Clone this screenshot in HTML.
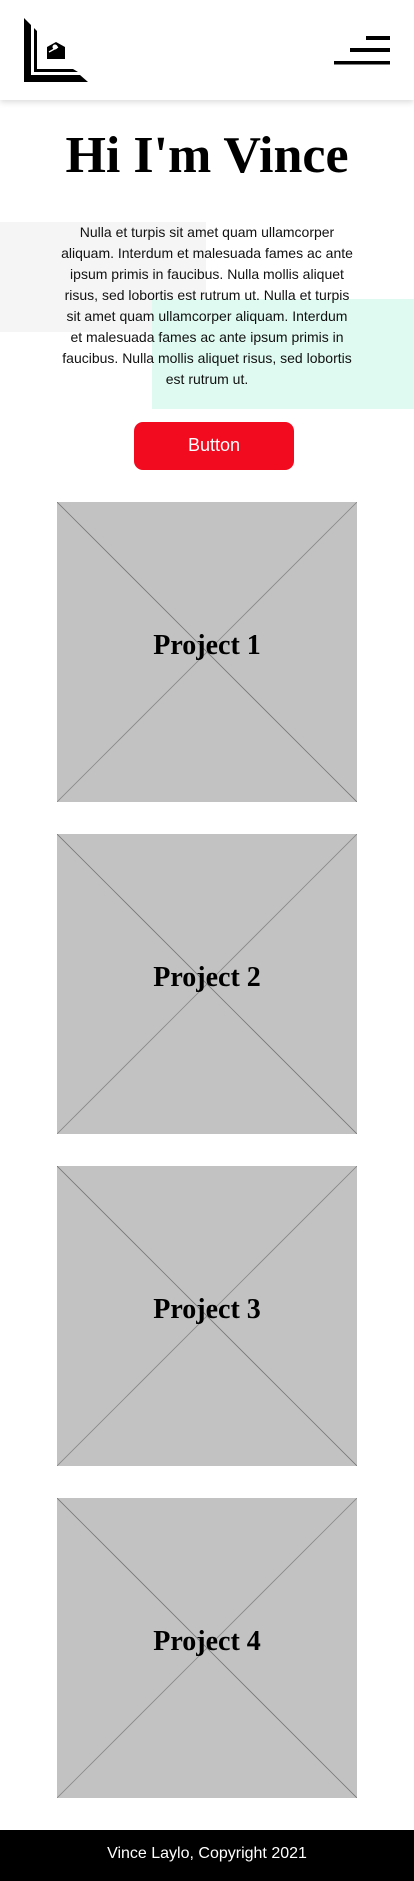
<!DOCTYPE html>
<html><head><meta charset="utf-8"><style>
*{margin:0;padding:0;box-sizing:border-box}
body{width:414px;height:1881px;background:#fff;position:relative;overflow:hidden;font-family:"Liberation Sans",sans-serif}
.hdr{position:absolute;left:0;top:0;width:414px;height:100px;background:#fff;box-shadow:0 2px 6px rgba(0,0,0,.15);z-index:3}
.abs{position:absolute}
h1{position:absolute;top:126px;left:0;width:414px;text-align:center;font-family:"Liberation Serif",serif;font-weight:bold;font-size:52px;letter-spacing:0;color:#000}
.p{position:absolute;left:60px;width:294px;top:222px;text-align:center;font-size:14px;line-height:21px;color:#111;z-index:2}
.btn{position:absolute;left:134px;top:422px;width:160px;height:48px;background:#f20a1e;border-radius:9px;color:#fff;font-size:18px;text-align:center;line-height:46px}
.box{position:absolute;left:57px;width:300px;height:300px;background:#c2c2c2}
.box svg{position:absolute;left:0;top:0}
.box span{position:absolute;left:0;width:300px;top:128px;text-align:center;font-family:"Liberation Serif",serif;font-weight:bold;font-size:28px;color:#000}
.ft{position:absolute;left:0;top:1830px;width:414px;height:51px;background:#000;color:#fff;font-size:16px;text-align:center;line-height:48px}
</style></head><body>
<div class="hdr">
<svg class="abs" style="left:0;top:0" width="414" height="100">
<polygon points="24,18 31,25 31,75 80,75 88,82 24,82" fill="#000"/>
<polygon points="34,28 37,31 37,69 73,69 78,72 34,72" fill="#000"/>
<polygon points="47,47 56,42 65,47 65,59 47,59" fill="#000"/>
<circle cx="55" cy="47" r="2.5" fill="#fff"/>
<line x1="49" y1="52" x2="58" y2="47" stroke="#fff" stroke-width="1.3"/>
<rect x="366" y="36" width="24" height="4" fill="#000"/>
<rect x="350" y="48" width="40" height="4" fill="#000"/>
<rect x="334" y="61" width="56" height="3.5" fill="#000"/>
</svg>
</div>
<h1>Hi I'm Vince</h1>
<div class="abs" style="left:0;top:222px;width:206px;height:110px;background:#f5f5f5"></div>
<div class="abs" style="left:152px;top:299px;width:262px;height:110px;background:#dffaf1"></div>
<div class="p">Nulla et turpis sit amet quam ullamcorper aliquam. Interdum et malesuada fames ac ante ipsum primis in faucibus. Nulla mollis aliquet risus, sed lobortis est rutrum ut. Nulla et turpis sit amet quam ullamcorper aliquam. Interdum et malesuada fames ac ante ipsum primis in faucibus. Nulla mollis aliquet risus, sed lobortis est rutrum ut.</div>
<div class="btn">Button</div>
<div class="box" style="top:502px"><svg width="300" height="300"><line x1="0" y1="0" x2="300" y2="300" stroke="#777" stroke-width=".8"/><line x1="300" y1="0" x2="0" y2="300" stroke="#888" stroke-width=".8"/></svg><span>Project 1</span></div>
<div class="box" style="top:834px"><svg width="300" height="300"><line x1="0" y1="0" x2="300" y2="300" stroke="#777" stroke-width=".8"/><line x1="300" y1="0" x2="0" y2="300" stroke="#888" stroke-width=".8"/></svg><span>Project 2</span></div>
<div class="box" style="top:1166px"><svg width="300" height="300"><line x1="0" y1="0" x2="300" y2="300" stroke="#777" stroke-width=".8"/><line x1="300" y1="0" x2="0" y2="300" stroke="#888" stroke-width=".8"/></svg><span>Project 3</span></div>
<div class="box" style="top:1498px"><svg width="300" height="300"><line x1="0" y1="0" x2="300" y2="300" stroke="#777" stroke-width=".8"/><line x1="300" y1="0" x2="0" y2="300" stroke="#888" stroke-width=".8"/></svg><span>Project 4</span></div>
<div class="ft">Vince Laylo, Copyright 2021</div>
</body></html>
